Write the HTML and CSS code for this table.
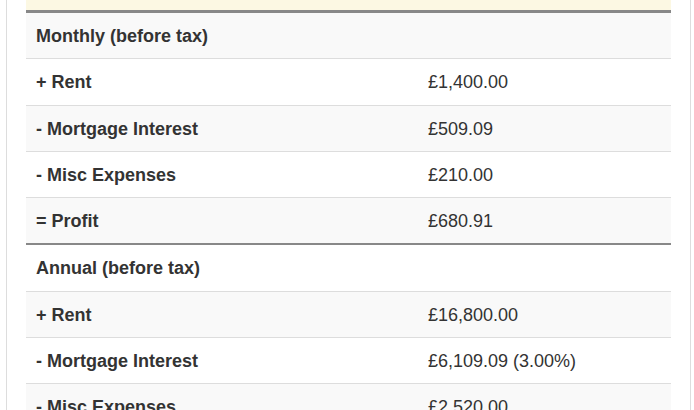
FILE: index.html
```html
<!DOCTYPE html>
<html>
<head>
<meta charset="utf-8">
<link rel="stylesheet" href="styles.css">
</head>
<body>
<div class="panel">
  <table class="figures">
    <tr class="warn"><td class="label"></td><td></td></tr>
    <tr class="section first"><th class="label">Monthly (before tax)</th><th></th></tr>
    <tr><th class="label">+ Rent</th><td>£1,400.00</td></tr>
    <tr><th class="label">- Mortgage Interest</th><td>£509.09</td></tr>
    <tr><th class="label">- Misc Expenses</th><td>£210.00</td></tr>
    <tr><th class="label">= Profit</th><td>£680.91</td></tr>
    <tr class="section second"><th class="label">Annual (before tax)</th><th></th></tr>
    <tr><th class="label">+ Rent</th><td>£16,800.00</td></tr>
    <tr><th class="label">- Mortgage Interest</th><td>£6,109.09 (3.00%)</td></tr>
    <tr><th class="label">- Misc Expenses</th><td>£2,520.00</td></tr>
    <tr><th class="label">= Profit</th><td>£10,170.91</td></tr>
  </table>
</div>
</body>
</html>
```
FILE: styles.css
```css
html, body {
  margin: 0;
  padding: 0;
  background: #fff;
  overflow: hidden;
}
body {
  font-family: "Liberation Sans", Arial, sans-serif;
  color: #333;
}
.panel {
  margin-left: 6px;
  width: 645px;
  padding: 0 19px 40px;
  border-left: 1px solid #ddd;
  border-right: 1px solid #ddd;
  min-height: 420px;
}
.figures {
  width: 645px;
  border-collapse: collapse;
  border-spacing: 0;
  font-size: 18px;
}
.figures th,
.figures td {
  padding: 11px 10px 9px;
  line-height: 25.25px;
  text-align: left;
  vertical-align: top;
  border-top: 1px solid #ddd;
}
.figures th { font-weight: bold; }
.figures td { font-weight: normal; }
.figures .label { width: 372px; }
.figures tr:nth-child(even) th,
.figures tr:nth-child(even) td { background: #f9f9f9; }
.figures tr:nth-child(odd) th,
.figures tr:nth-child(odd) td { background: #fff; }
.figures tr.warn td {
  background: #fcf8e3;
  height: 10px;
  padding: 0;
  border-top: none;
}
.figures tr.first th { border-top: 3px solid #888; }
.figures tr.second th { border-top: 2px solid #888; }
```
